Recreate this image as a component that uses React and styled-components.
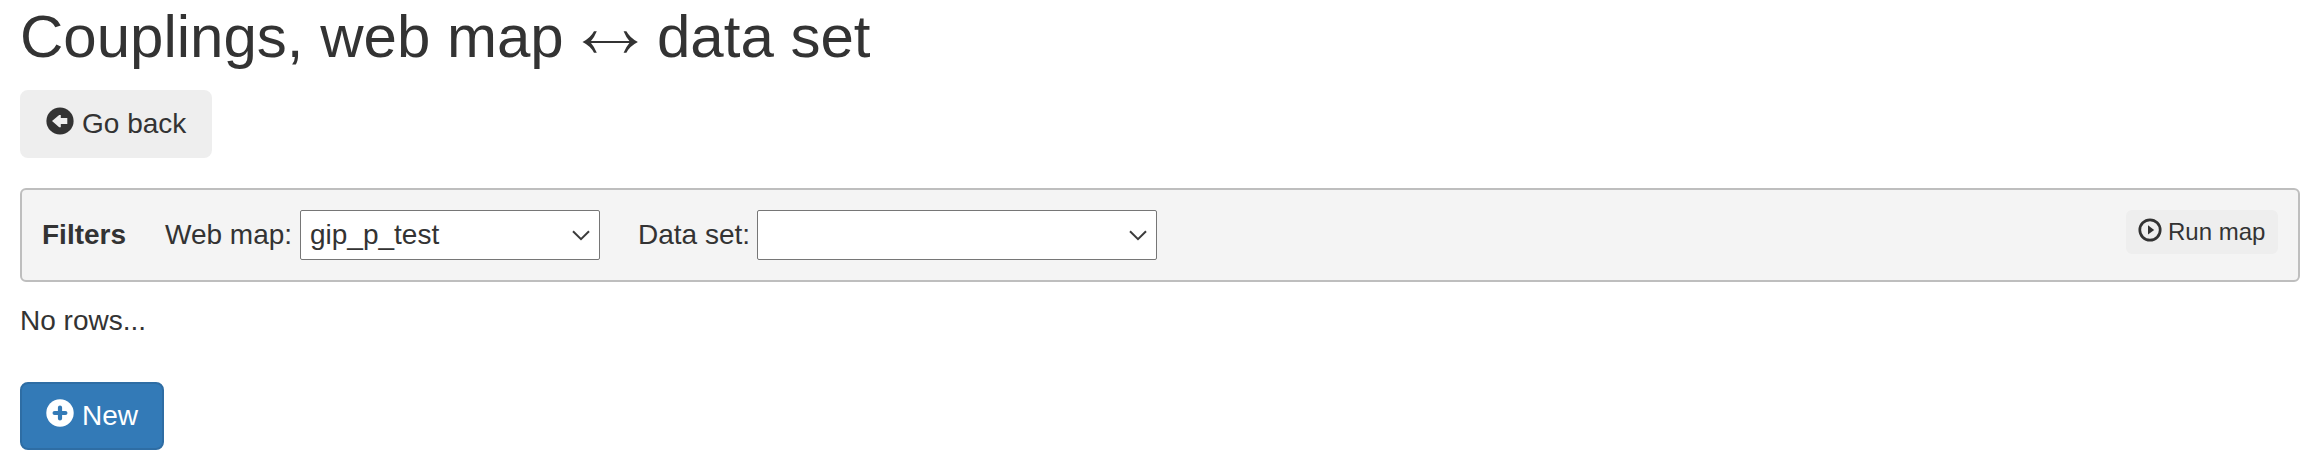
import React from 'react';
import styled, { createGlobalStyle, css } from 'styled-components';

const GlobalStyle = createGlobalStyle`
  *, *::before, *::after { box-sizing: border-box; }
  body {
    margin: 0;
    background: #fff;
    color: #333;
    font: 28px/40px "Liberation Sans", Arial, sans-serif;
  }
`;

const Page = styled.main`
  display: flex;
  flex-direction: column;
  align-items: flex-start;
  padding: 4px 20px 0;
`;

const Title = styled.h1`
  height: 66px;
  margin: 0 0 20px;
  font-size: 60px;
  line-height: 66px;
  font-weight: 400;
  white-space: nowrap;
`;

const TitleArrow = styled.svg`
  width: 60px;
  height: 24px;
  vertical-align: 3px;
`;

const buttonSizes = {
  large: css`
    height: 68px;
    padding: 0 0 0 24px;
    border-radius: 8px;
    font-size: 28px;
    gap: 8px;
  `,
  small: css`
    height: 44px;
    padding: 0 0 0 10px;
    border-radius: 6px;
    font-size: 24px;
    gap: 6px;
  `,
};

const Button = styled.button`
  display: inline-flex;
  align-items: center;
  justify-content: flex-start;
  flex: none;
  width: ${(p) => p.$width}px;
  border: 2px solid ${(p) => (p.$primary ? '#2e6da4' : '#eee')};
  background: ${(p) => (p.$primary ? '#337ab7' : '#eee')};
  color: ${(p) => (p.$primary ? '#fff' : '#333')};
  font-family: inherit;
  line-height: 1;
  white-space: nowrap;
  ${(p) => buttonSizes[p.$size]}
`;

const Icon = styled.svg`
  display: block;
  flex: none;
  width: ${(p) => p.$size}px;
  height: ${(p) => p.$size}px;
  margin-bottom: ${(p) => p.$lift}px;
`;

const FilterBar = styled.section`
  display: flex;
  align-items: flex-start;
  width: 100%;
  height: 94px;
  margin: 30px 0 19px;
  padding: 20px;
  border: 2px solid #bebebe;
  border-radius: 6px;
  background: #f4f4f4;
`;

const FilterHeading = styled.strong`
  width: 123px;
  line-height: 50px;
`;

const Field = styled.label`
  display: flex;
  align-items: center;
  justify-content: space-between;
  width: ${(p) => p.$width}px;
  margin-right: 38px;
  line-height: 50px;
  white-space: nowrap;
`;

const SelectBox = styled.span`
  display: flex;
  align-items: center;
  justify-content: space-between;
  width: ${(p) => p.$width}px;
  height: 50px;
  padding: 0 9px;
  border: 1px solid #767676;
  border-radius: 2px;
  background: #fff;
  line-height: 48px;
`;

const Chevron = styled.svg`
  width: 18px;
  height: 11px;
  margin-left: auto;
`;

const Spacer = styled.div`
  flex: 1;
`;

const Empty = styled.p`
  margin: 0 0 41px;
`;

function Select({ width, value }) {
  return (
    <SelectBox $width={width}>
      {value}
      <Chevron viewBox="0 0 18 11" fill="none" stroke="#3b3b3b" strokeWidth="2">
        <path d="M1 1.2 L9 9.2 L17 1.2" />
      </Chevron>
    </SelectBox>
  );
}

export default function App() {
  return (
    <>
      <GlobalStyle />
      <Page>
        <Title>
          Couplings, web map{' '}
          <TitleArrow viewBox="0 0 60 24" fill="#333" role="img" aria-label="↔">
            <path d="M2.5 12 Q10.5 8 14 1.3 L16.8 1.3 Q14.5 7 11 11 H49.4 Q45.9 7 43.6 1.3 L46.4 1.3 Q49.9 8 57.9 12 Q49.9 16 46.4 22.7 L43.6 22.7 Q45.9 17 49.4 13 H11 Q14.5 17 16.8 22.7 L14 22.7 Q10.5 16 2.5 12 Z" />
          </TitleArrow>{' '}
          data set
        </Title>
        <Button $size="large" $width={192}>
          <Icon viewBox="0 0 28 28" $size={28} $lift={6}>
            <circle cx="14" cy="14" r="13.6" fill="#333" />
            <path d="M6 14 L13.2 8 H14.8 V11 H21.3 V17 H14.8 V20.2 H13.2 Z" fill="#eee" />
          </Icon>
          Go back
        </Button>
        <FilterBar>
          <FilterHeading>Filters</FilterHeading>
          <Field $width={435}>
            Web map:
            <Select width={300} value="gip_p_test" />
          </Field>
          <Field $width={519}>
            Data set:
            <Select width={400} />
          </Field>
          <Spacer />
          <Button $size="small" $width={152}>
            <Icon viewBox="0 0 24 24" $size={24} $lift={4}>
              <circle cx="12" cy="12" r="10.2" fill="none" stroke="#333" strokeWidth="2.7" />
              <path d="M10 7.2 L16.2 12 L10 16.6 Z" fill="#333" />
            </Icon>
            Run map
          </Button>
        </FilterBar>
        <Empty>No rows...</Empty>
        <Button $size="large" $width={144} $primary>
          <Icon viewBox="0 0 28 28" $size={28} $lift={6}>
            <circle cx="14" cy="14" r="13.7" fill="#fff" />
            <path d="M14 8.6 V19.4 M8.6 14 H19.4" stroke="#337ab7" strokeWidth="4.2" strokeLinecap="round" />
          </Icon>
          New
        </Button>
      </Page>
    </>
  );
}
